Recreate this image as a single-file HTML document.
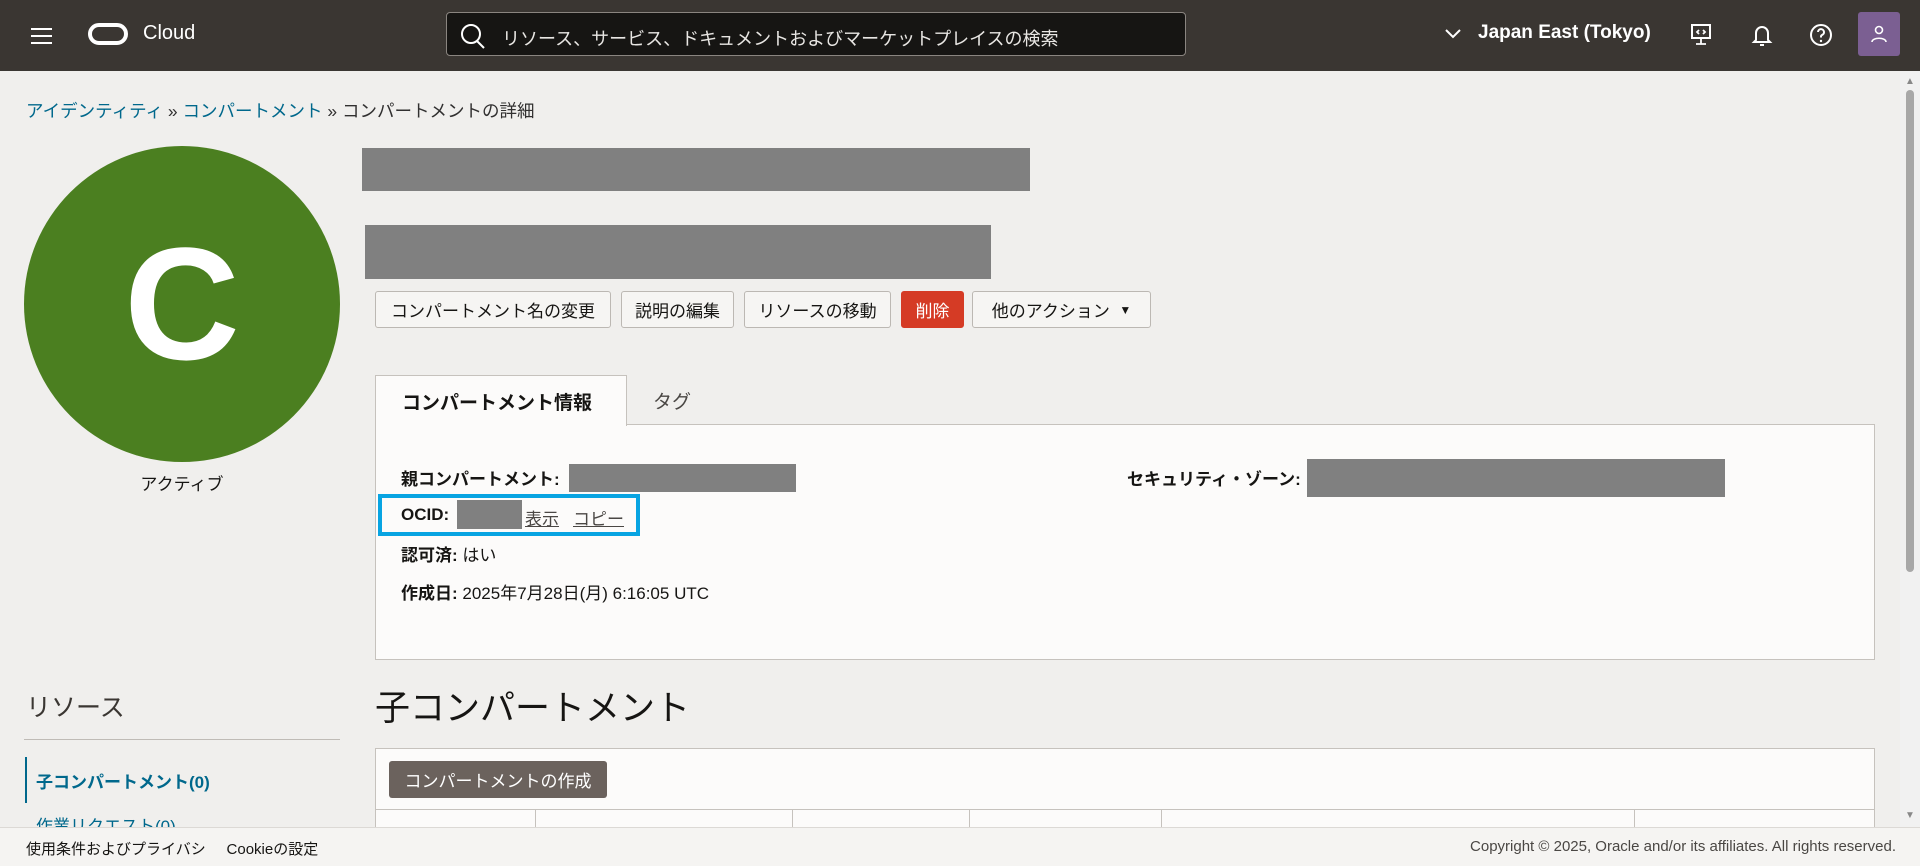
<!DOCTYPE html>
<html><head><meta charset="utf-8"><style>
*{box-sizing:border-box;margin:0;padding:0}
body{width:1920px;height:866px;overflow:hidden;background:#f0efed;font-family:"Liberation Sans","Noto Sans CJK JP",sans-serif;color:#161513;position:relative;font-size:16px}
.a{position:absolute}
.hdr{left:0;top:0;width:1920px;height:71px;background:#3a3632}
.gray{background:#808080}
.btn{position:absolute;top:291px;height:37px;border:1px solid #bcb8b3;border-radius:3px;background:#f6f5f3;font-size:17px;display:flex;align-items:center;justify-content:center;color:#161513}
.lbl{font-weight:bold}
</style></head><body>
<div class="a hdr"></div>
<div class="a" style="left:31px;top:28px;width:21px;height:2px;background:#fff;box-shadow:0 7px 0 #fff,0 14px 0 #fff"></div>
<div class="a" style="left:88px;top:23px;width:40px;height:22px;border:4px solid #fff;border-radius:11px"></div>
<div class="a" style="left:143px;top:22px;color:#fff;font-size:20px">Cloud</div>
<div class="a" style="left:446px;top:12px;width:740px;height:44px;background:#161513;border:1px solid #8a8580;border-radius:4px"></div>
<svg class="a" style="left:459px;top:22px" width="28" height="28" viewBox="0 0 28 28"><circle cx="12" cy="12" r="9" fill="none" stroke="#fff" stroke-width="2"/><path d="M18 19l7 7" stroke="#fff" stroke-width="2"/></svg>
<div class="a" style="left:502px;top:25px;color:#e8e6e3;font-size:18px">リソース、サービス、ドキュメントおよびマーケットプレイスの検索</div>
<svg class="a" style="left:1444px;top:27px" width="18" height="14"><path d="M2 3l7 7 7-7" fill="none" stroke="#fff" stroke-width="2"/></svg>
<div class="a" style="left:1478px;top:22px;color:#fff;font-size:19px;font-weight:bold">Japan East (Tokyo)</div>
<svg class="a" style="left:1689px;top:22px" width="24" height="26" viewBox="0 0 24 26"><rect x="3" y="3" width="18" height="13" fill="none" stroke="#fff" stroke-width="2"/><path d="M12 16v6M7 22h10M10 8l-2 2 2 2M14 8l2 2-2 2" fill="none" stroke="#fff" stroke-width="1.8"/></svg>
<svg class="a" style="left:1750px;top:22px" width="24" height="26" viewBox="0 0 24 26"><path d="M6 18V11a6 6 0 0 1 12 0v7l2 2H4z" fill="none" stroke="#fff" stroke-width="2"/><path d="M10 23h4" stroke="#fff" stroke-width="2"/></svg>
<svg class="a" style="left:1808px;top:22px" width="26" height="26" viewBox="0 0 26 26"><circle cx="13" cy="13" r="10" fill="none" stroke="#fff" stroke-width="2"/><path d="M10 10a3 3 0 1 1 4 3c-1 .5-1 1-1 2.5" fill="none" stroke="#fff" stroke-width="2"/><circle cx="13" cy="19" r="1.2" fill="#fff"/></svg>
<div class="a" style="left:1858px;top:12px;width:42px;height:44px;background:#7b5f92;border-radius:3px"></div>
<svg class="a" style="left:1868px;top:23px" width="22" height="22"><circle cx="11" cy="7" r="3.5" fill="none" stroke="#fff" stroke-width="1.6"/><path d="M4 19c0-5 14-5 14 0" fill="none" stroke="#fff" stroke-width="1.6"/></svg>
<div class="a" style="left:26px;top:98px;font-size:17.5px;color:#313030"><span style="color:#00688c">アイデンティティ</span> » <span style="color:#00688c">コンパートメント</span> » コンパートメントの詳細</div>
<div class="a" style="left:24px;top:146px;width:316px;height:316px;border-radius:50%;background:#4b7f20;color:#fff;font-size:160px;font-weight:bold;text-align:center;line-height:316px">C</div>
<div class="a" style="left:24px;top:470px;width:316px;text-align:center;font-size:17px">アクティブ</div>
<div class="a gray" style="left:362px;top:148px;width:668px;height:43px"></div>
<div class="a gray" style="left:365px;top:225px;width:626px;height:54px"></div>
<div class="btn" style="left:375px;width:236px">コンパートメント名の変更</div>
<div class="btn" style="left:621px;width:113px">説明の編集</div>
<div class="btn" style="left:744px;width:147px">リソースの移動</div>
<div class="btn" style="left:901px;width:63px;background:#d53b25;border-color:#d53b25;color:#fff">削除</div>
<div class="btn" style="left:972px;width:179px">他のアクション&nbsp;&nbsp;<span style="font-size:12px">▼</span></div>
<div class="a" style="left:375px;top:424px;width:1500px;height:236px;background:#fcfbfa;border:1px solid #c6c2bd"></div>
<div class="a" style="left:375px;top:375px;width:252px;height:51px;background:#fcfbfa;border:1px solid #c6c2bd;border-bottom:none;font-size:19px;font-weight:bold;padding:12px 0 0 26px">コンパートメント情報</div>
<div class="a" style="left:653px;top:387px;font-size:19px;color:#4a4744">タグ</div>
<div class="a" style="left:401px;top:465px;font-size:17px"><span class="lbl">親コンパートメント:</span></div>
<div class="a gray" style="left:569px;top:464px;width:227px;height:28px"></div>
<div class="a" style="left:1127px;top:465px;font-size:17px"><span class="lbl">セキュリティ・ゾーン:</span></div>
<div class="a gray" style="left:1307px;top:459px;width:418px;height:38px"></div>
<div class="a" style="left:378px;top:494px;width:262px;height:42px;border:4px solid #08a4e2"></div>
<div class="a" style="left:401px;top:505px;font-size:17px"><span class="lbl">OCID:</span></div>
<div class="a gray" style="left:457px;top:500px;width:65px;height:29px"></div>
<div class="a" style="left:525px;top:505px;font-size:17px;color:#4a4744;text-decoration:underline">表示</div>
<div class="a" style="left:573px;top:505px;font-size:17px;color:#4a4744;text-decoration:underline">コピー</div>
<div class="a" style="left:401px;top:541px;font-size:17px"><span class="lbl">認可済:</span> はい</div>
<div class="a" style="left:401px;top:579px;font-size:17px"><span class="lbl">作成日:</span> 2025年7月28日(月) 6:16:05 UTC</div>
<div class="a" style="left:375px;top:680px;font-size:35px">子コンパートメント</div>
<div class="a" style="left:26px;top:688px;font-size:25px;color:#3a3632">リソース</div>
<div class="a" style="left:24px;top:739px;width:316px;height:1px;background:#bfbbb6"></div>
<div class="a" style="left:25px;top:757px;width:2px;height:46px;background:#00688c"></div>
<div class="a" style="left:36px;top:768px;font-size:17px;font-weight:bold;color:#00688c">子コンパートメント(0)</div>
<div class="a" style="left:36px;top:812px;font-size:17px;color:#00688c">作業リクエスト(0)</div>
<div class="a" style="left:375px;top:748px;width:1500px;height:90px;background:#fcfbfa;border:1px solid #c6c2bd"></div>
<div class="a" style="left:389px;top:761px;width:218px;height:37px;background:#6b625d;border-radius:3px;color:#fff;font-size:17px;display:flex;align-items:center;justify-content:center">コンパートメントの作成</div>
<div class="a" style="left:376px;top:809px;width:1498px;height:1px;background:#c6c2bd"></div>
<div class="a" style="left:535px;top:809px;width:1px;height:20px;background:#c6c2bd;box-shadow:257px 0 #c6c2bd,434px 0 #c6c2bd,626px 0 #c6c2bd,1099px 0 #c6c2bd"></div>
<div class="a" style="left:0;top:827px;width:1920px;height:39px;background:#f5f4f2;border-top:1px solid #dcd9d5"></div>
<div class="a" style="left:26px;top:838px;font-size:15px">使用条件およびプライバシ&nbsp;&nbsp;&nbsp;&nbsp;&nbsp;Cookieの設定</div>
<div class="a" style="right:24px;top:838px;font-size:15px;color:#4a4744">Copyright © 2025, Oracle and/or its affiliates. All rights reserved.</div>
<div class="a" style="left:1900px;top:71px;width:20px;height:756px;background:#f1f1f1"></div>
<div class="a" style="left:1906px;top:90px;width:8px;height:482px;background:#a8a8a8;border-radius:4px"></div>
<div class="a" style="left:1905px;top:76px;font-size:10px;color:#888">▲</div>
<div class="a" style="left:1905px;top:810px;font-size:10px;color:#888">▼</div>
</body></html>
